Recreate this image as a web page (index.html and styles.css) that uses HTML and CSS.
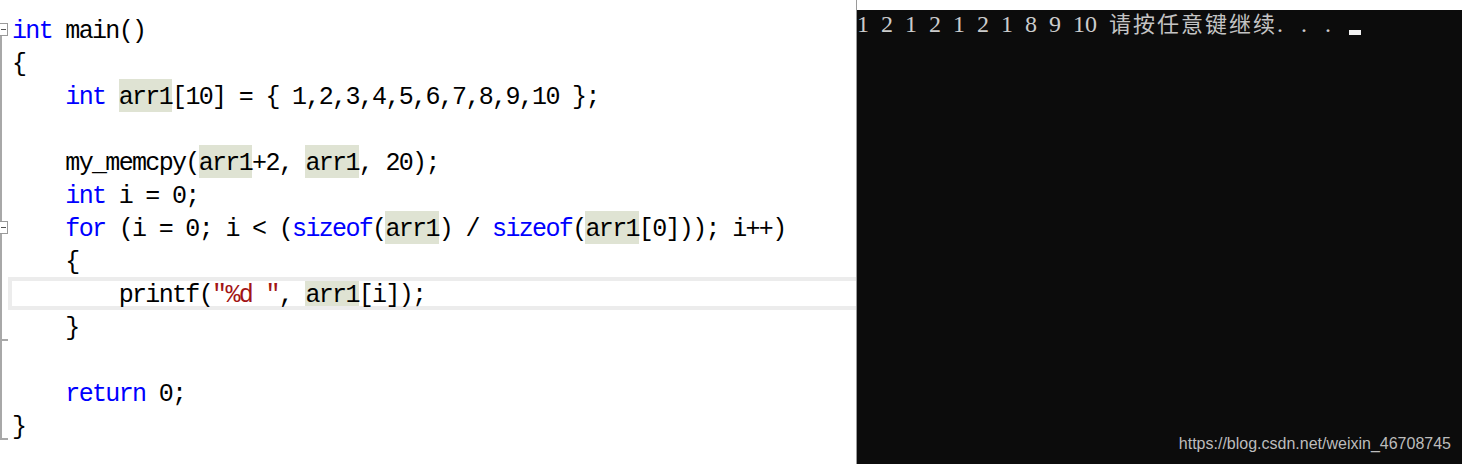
FILE: index.html
```html
<!DOCTYPE html>
<html>
<head>
<meta charset="utf-8">
<link rel="stylesheet" href="styles.css">
</head>
<body>
<div class="page">
  <div class="editor">
    <div class="line"><div class="gut g-open"></div><div class="code"><span class="kw">int</span> main()</div></div>
    <div class="line"><div class="gut g-line"></div><div class="code">{</div></div>
    <div class="line"><div class="gut g-line"></div><div class="code">    <span class="kw">int</span> <span class="hl">arr1</span>[10] = { 1,2,3,4,5,6,7,8,9,10 };</div></div>
    <div class="line"><div class="gut g-line"></div><div class="code"></div></div>
    <div class="line"><div class="gut g-line"></div><div class="code">    my_memcpy(<span class="hl">arr1</span>+2, <span class="hl">arr1</span>, 20);</div></div>
    <div class="line"><div class="gut g-line"></div><div class="code">    <span class="kw">int</span> i = 0;</div></div>
    <div class="line"><div class="gut g-line g-box"></div><div class="code">    <span class="kw">for</span> (i = 0; i &lt; (<span class="kw">sizeof</span>(<span class="hl">arr1</span>) / <span class="kw">sizeof</span>(<span class="hl">arr1</span>[0])); i++)</div></div>
    <div class="line"><div class="gut g-line"></div><div class="code">    {</div></div>
    <div class="line"><div class="gut g-line"></div><div class="code current">        printf(<span class="str">"%d "</span>, <span class="hl">arr1</span>[i]);</div></div>
    <div class="line"><div class="gut g-line g-tick"></div><div class="code">    }</div></div>
    <div class="line"><div class="gut g-line"></div><div class="code"></div></div>
    <div class="line"><div class="gut g-line"></div><div class="code">    <span class="kw">return</span> 0;</div></div>
    <div class="line"><div class="gut g-end"></div><div class="code">}</div></div>
  </div>
  <div class="console-wrap">
    <div class="console">
      <div class="out"><span class="num">1 2 1 2 1 2 1 8 9 10 </span><span class="cjk">请按任意键继续</span><span class="dots">. . . </span><span class="cursor"></span></div>
      <div class="mark">https://blog.csdn.net/weixin_46708745</div>
    </div>
  </div>
</div>
</body>
</html>
```
FILE: styles.css
```css
html, body {
  margin: 0;
  padding: 0;
  background: #ffffff;
}

.page {
  display: flex;
  width: 1462px;
  height: 464px;
  overflow: hidden;
}

.editor {
  width: 856px;
  flex: none;
  padding-top: 13px;
  display: flex;
  flex-direction: column;
}

.line {
  display: flex;
  height: 33px;
}

.gut {
  width: 8px;
  flex: none;
  position: relative;
}

.g-line::before,
.g-open::before,
.g-end::before {
  content: "";
  position: absolute;
  left: 0;
  width: 2px;
  background: #a8a8a8;
}

.g-line::before {
  top: 0;
  bottom: 0;
}

.g-open::before {
  top: 22px;
  bottom: 0;
}

.g-end::before {
  top: 0;
  height: 31px;
}

.g-open::after,
.g-box::after {
  content: "";
  position: absolute;
  left: -1px;
  top: 10px;
  width: 7px;
  height: 11px;
  border: 1px solid #9a9a9a;
  background: linear-gradient(#555555, #555555) 1px 5px / 5px 1px no-repeat, #ffffff;
}

.g-tick::after,
.g-end::after {
  content: "";
  position: absolute;
  left: 0;
  top: 29px;
  width: 8px;
  height: 2px;
  background: #a8a8a8;
}

.code {
  flex: 1;
  box-sizing: border-box;
  height: 33px;
  padding-left: 4px;
  font-family: "Liberation Mono", monospace;
  font-size: 25px;
  letter-spacing: -1.667px;
  line-height: 37px;
  white-space: pre;
  color: #000000;
}

.code.current {
  border: 4px solid #ececec;
  border-right: none;
  padding-left: 0;
  line-height: 29px;
}

.kw {
  color: #0000ff;
}

.str {
  color: #a31515;
}

.hl {
  display: inline-block;
  height: 33px;
  background: #dfe3d3;
}

.code.current .hl {
  height: 25px;
}

.console-wrap {
  width: 606px;
  flex: none;
  border-left: 1px solid #9a9a9a;
  box-sizing: border-box;
  padding-top: 10px;
  display: flex;
}

.console {
  flex: 1;
  background: #0c0c0c;
  display: flex;
  flex-direction: column;
  color: #cccccc;
}

.out {
  white-space: pre;
  line-height: 24px;
  height: 24px;
}

.num,
.dots {
  font-family: "Liberation Serif", serif;
  font-size: 24px;
}

.num {
  word-spacing: 6px;
}

.dots {
  letter-spacing: 6px;
}

.cjk {
  font-family: "Noto Sans CJK SC", sans-serif;
  font-size: 22px;
  letter-spacing: 2px;
  color: #c4c4c4;
}

.cursor {
  display: inline-block;
  width: 12px;
  height: 5px;
  background: #f2f2f2;
  vertical-align: -3px;
}

.mark {
  margin-top: auto;
  align-self: flex-end;
  padding: 0 11px 10px 0;
  font-family: "Liberation Sans", Arial, sans-serif;
  font-size: 16px;
  line-height: 20px;
  color: #bcbcbc;
}
```
